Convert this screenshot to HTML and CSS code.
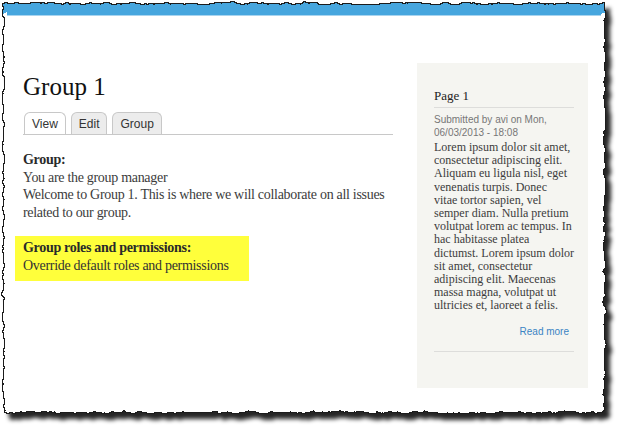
FILE: index.html
```html
<!DOCTYPE html>
<html>
<head>
<meta charset="utf-8">
<link rel="stylesheet" href="styles.css">
</head>
<body>
<svg class="frame" width="620" height="430" viewBox="0 0 620 430" aria-hidden="true">
  <defs>
    <filter id="torn" x="-5%" y="-5%" width="110%" height="112%">
      <feTurbulence type="fractalNoise" baseFrequency="0.13" numOctaves="3" seed="11" result="noise"/>
      <feDisplacementMap in="SourceGraphic" in2="noise" scale="5" xChannelSelector="R" yChannelSelector="G" result="torn"/>
      <feMorphology in="torn" operator="dilate" radius="1" result="fat"/>
      <feFlood flood-color="#1b1b1b" result="ink"/>
      <feComposite in="ink" in2="fat" operator="in" result="edge"/>
      <feFlood flood-color="#000" flood-opacity="0.85" result="black"/>
      <feComposite in="black" in2="fat" operator="in" result="sil"/>
      <feOffset in="sil" dx="5" dy="6" result="off"/>
      <feGaussianBlur in="off" stdDeviation="2.2" result="shadow"/>
      <feMerge>
        <feMergeNode in="shadow"/>
        <feMergeNode in="edge"/>
        <feMergeNode in="torn"/>
      </feMerge>
    </filter>
  </defs>
  <g filter="url(#torn)">
    <rect x="4" y="4" width="600" height="408" fill="#fff"/>
    <rect x="4" y="4" width="600" height="9" fill="#46a6de"/>
  </g>
</svg>
<div class="paper">
  <div class="topbar"></div>
  <div class="content">
    <main class="main">
      <h1 class="title">Group 1</h1>
      <ul class="tabs">
        <li class="tab active">View</li>
        <li class="tab">Edit</li>
        <li class="tab">Group</li>
      </ul>
      <div class="field">
        <div class="label">Group:</div>
        <div>You are the group manager</div>
        <div>Welcome to Group 1. This is where we will collaborate on all issues related to our group.</div>
      </div>
      <div class="highlight">
        <div class="label">Group roles and permissions:</div>
        <div>Override default roles and permissions</div>
      </div>
    </main>
    <aside class="sidebar">
      <h2 class="node-title">Page 1</h2>
      <div class="submitted">Submitted by avi on Mon, 06/03/2013 - 18:08</div>
      <p class="teaser">Lorem ipsum dolor sit amet, consectetur adipiscing elit. Aliquam eu ligula nisl, eget venenatis turpis. Donec<br>vitae tortor sapien, vel semper diam. Nulla pretium volutpat lorem ac tempus. In hac habitasse platea dictumst. Lorem ipsum dolor sit amet, consectetur adipiscing elit. Maecenas massa magna, volutpat ut ultricies et, laoreet a felis.</p>
      <div class="links"><a class="readmore">Read more</a></div>
    </aside>
  </div>
</div>
</body>
</html>
```
FILE: styles.css
```css
html, body {
  margin: 0;
  padding: 0;
  background: #fff;
}
body {
  width: 620px;
  height: 430px;
  overflow: hidden;
  position: relative;
  display: flow-root;
  font-family: "Liberation Serif", serif;
}
.frame {
  position: absolute;
  left: 0;
  top: 0;
}
.paper {
  position: relative;
  display: flow-root;
  margin: 4px;
  width: 600px;
  height: 409px;
}
.topbar {
  margin: 3px 3px 0;
  height: 8px;
  background: #46a6de;
  border-bottom: 1px solid #a8d4ef;
}
.content {
  display: flex;
  align-items: flex-start;
  padding: 47px 14px 0 19px;
}
.main {
  width: 370px;
  padding-top: 9px;
  color: #3c3c3c;
  font-size: 14px;
  line-height: 17.7px;
  letter-spacing: -0.3px;
}
.title {
  margin: 0;
  font-weight: normal;
  font-size: 25px;
  line-height: 30px;
  letter-spacing: 0;
  color: #111;
}
.tabs {
  display: flex;
  gap: 5px;
  list-style: none;
  margin: 10px 0 0;
  padding: 0 0 0 1px;
  border-bottom: 1px solid #c8c8c8;
  letter-spacing: 0;
}
.tab {
  height: 21px;
  padding: 0 7px;
  border: 1px solid #c8c8c8;
  border-bottom: none;
  border-radius: 6px 6px 0 0;
  background: #ececec;
  font-family: "Liberation Sans", Arial, sans-serif;
  font-size: 12px;
  line-height: 22px;
  color: #333;
}
.tab.active {
  background: #fff;
}
.field {
  margin-top: 16px;
}
.label {
  font-weight: bold;
  color: #2a2a2a;
}
.highlight {
  margin: 14px 0 0 -8px;
  width: 226px;
  padding: 3px 0 7px 8px;
  background: #ffff3b;
  color: #333;
}
.sidebar {
  box-sizing: border-box;
  flex: none;
  margin-left: 24px;
  width: 171px;
  height: 325px;
  padding: 25px 14px 0 17px;
  background: #f5f5f1;
}
.node-title {
  margin: 0;
  padding-bottom: 3px;
  border-bottom: 1px solid #dddddb;
  font-weight: normal;
  font-size: 13px;
  line-height: 16px;
  color: #222;
}
.submitted {
  margin-top: 5px;
  font-family: "Liberation Sans", Arial, sans-serif;
  font-size: 10px;
  line-height: 13px;
  color: #777;
}
.teaser {
  margin: 2px 0 0;
  font-size: 12px;
  line-height: 13.2px;
  color: #3c3c3c;
}
.links {
  margin-top: 8px;
  padding-bottom: 12px;
  border-bottom: 1px solid #dddddb;
  text-align: right;
  padding-right: 5px;
}
.readmore {
  font-family: "Liberation Sans", Arial, sans-serif;
  font-size: 10px;
  color: #3a84c4;
}
```
